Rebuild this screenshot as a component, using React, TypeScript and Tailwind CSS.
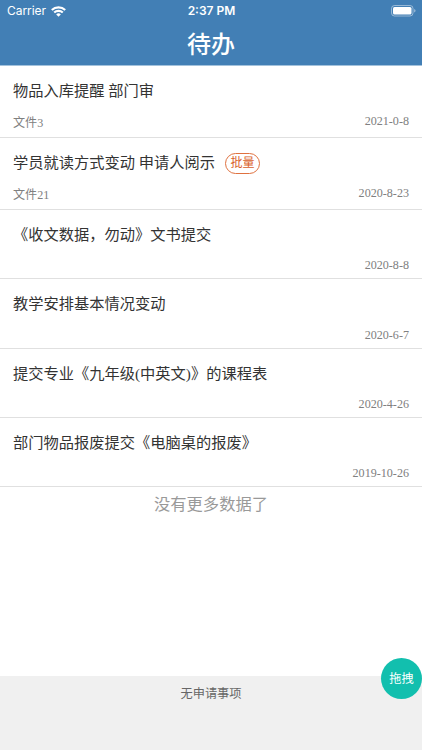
const items = [
  { title: '物品入库提醒 部门审', file: '文件3', date: '2021-0-8', height: 'h-[72px]' },
  { title: '学员就读方式变动 申请人阅示', file: '文件21', date: '2020-8-23', height: 'h-[72px]', batch: true },
  { title: '《收文数据，勿动》文书提交', date: '2020-8-8', height: 'h-[69px]' },
  { title: '教学安排基本情况变动', date: '2020-6-7', height: 'h-[70px]' },
  { title: '提交专业《九年级(中英文)》的课程表', date: '2020-4-26', height: 'h-[69px]' },
  { title: '部门物品报废提交《电脑桌的报废》', date: '2019-10-26', height: 'h-[69px]' },
];

function StatusBar() {
  return (
    <div className="grid h-[22px] grid-cols-3 items-center pl-[7px] pr-[6px] font-['Inter','Liberation_Sans',sans-serif] text-[12px] leading-none">
      <div className="flex items-center gap-[5px]">
        <span className="tracking-[-0.05px]">Carrier</span>
        <svg width="15" height="11" viewBox="0 0 15 11" fill="none" stroke="currentColor" strokeWidth="2.1">
          <path d="M.8 4.1a9.5 9.5 0 0 1 13.4 0M3.2 6.6a6.1 6.1 0 0 1 8.6 0" />
          <path d="M7.5 10.7 5.2 8.4a3.2 3.2 0 0 1 4.6 0Z" fill="currentColor" stroke="none" />
        </svg>
      </div>
      <span className="text-center font-semibold">2:37 PM</span>
      <svg className="justify-self-end" width="25" height="12" viewBox="0 0 25 12" fill="none">
        <rect x=".5" y=".5" width="21.5" height="10.5" rx="3" stroke="white" strokeOpacity=".45" />
        <rect x="2" y="2" width="18.5" height="7.5" rx="1.5" fill="white" />
        <path d="M23.2 4c1.8.6 1.8 2.9 0 3.5Z" fill="white" fillOpacity=".5" />
      </svg>
    </div>
  );
}

export default function App() {
  return (
    <main className="relative flex h-[750px] w-full flex-col overflow-hidden bg-white font-['Liberation_Serif','Noto_Sans_CJK_SC',serif] text-[#333]">
      <header className="h-[66px] shrink-0 border-b border-[#a3c2dc] bg-[#427fb5] text-white">
        <StatusBar />
        <h1 className="pt-px text-center text-[24px] font-medium leading-[44px]">待办</h1>
      </header>
      <section className="flex-1">
        {items.map((item) => (
          <article key={item.title} className={`${item.height} flex flex-col justify-between border-b border-[#e0e0e0] px-[13px] pt-[13px] ${item.file ? 'pb-[5px]' : 'pb-1'}`}>
            <div className="flex h-6 items-center gap-[10px] text-[15.25px] leading-[24px]">
              <h2 className="whitespace-nowrap">{item.title}</h2>
              {item.batch && <span className="flex h-[21px] w-[35px] items-center justify-center rounded-full border border-[#df713f] text-[12px] text-[#d95f2b]">批量</span>}
            </div>
            <div className="flex h-[18px] items-start justify-between text-[12.1px] leading-[18px] text-[#808080]">
              <span>{item.file}</span>
              <time className={item.file ? '-mt-[2px]' : ''}>{item.date}</time>
            </div>
          </article>
        ))}
        <p className="pt-px text-center text-[16.3px] leading-[34px] text-[#999]">没有更多数据了</p>
      </section>
      <footer className="h-[74px] shrink-0 bg-[#f0f0f0] pt-[9px] text-center text-[12.2px] leading-[18px] text-[#666]">无申请事项</footer>
      <button className="absolute left-[381px] top-[658px] size-[41px] rounded-full bg-[#12bfae] pt-px text-[12.2px] text-white">拖拽</button>
    </main>
  );
}
